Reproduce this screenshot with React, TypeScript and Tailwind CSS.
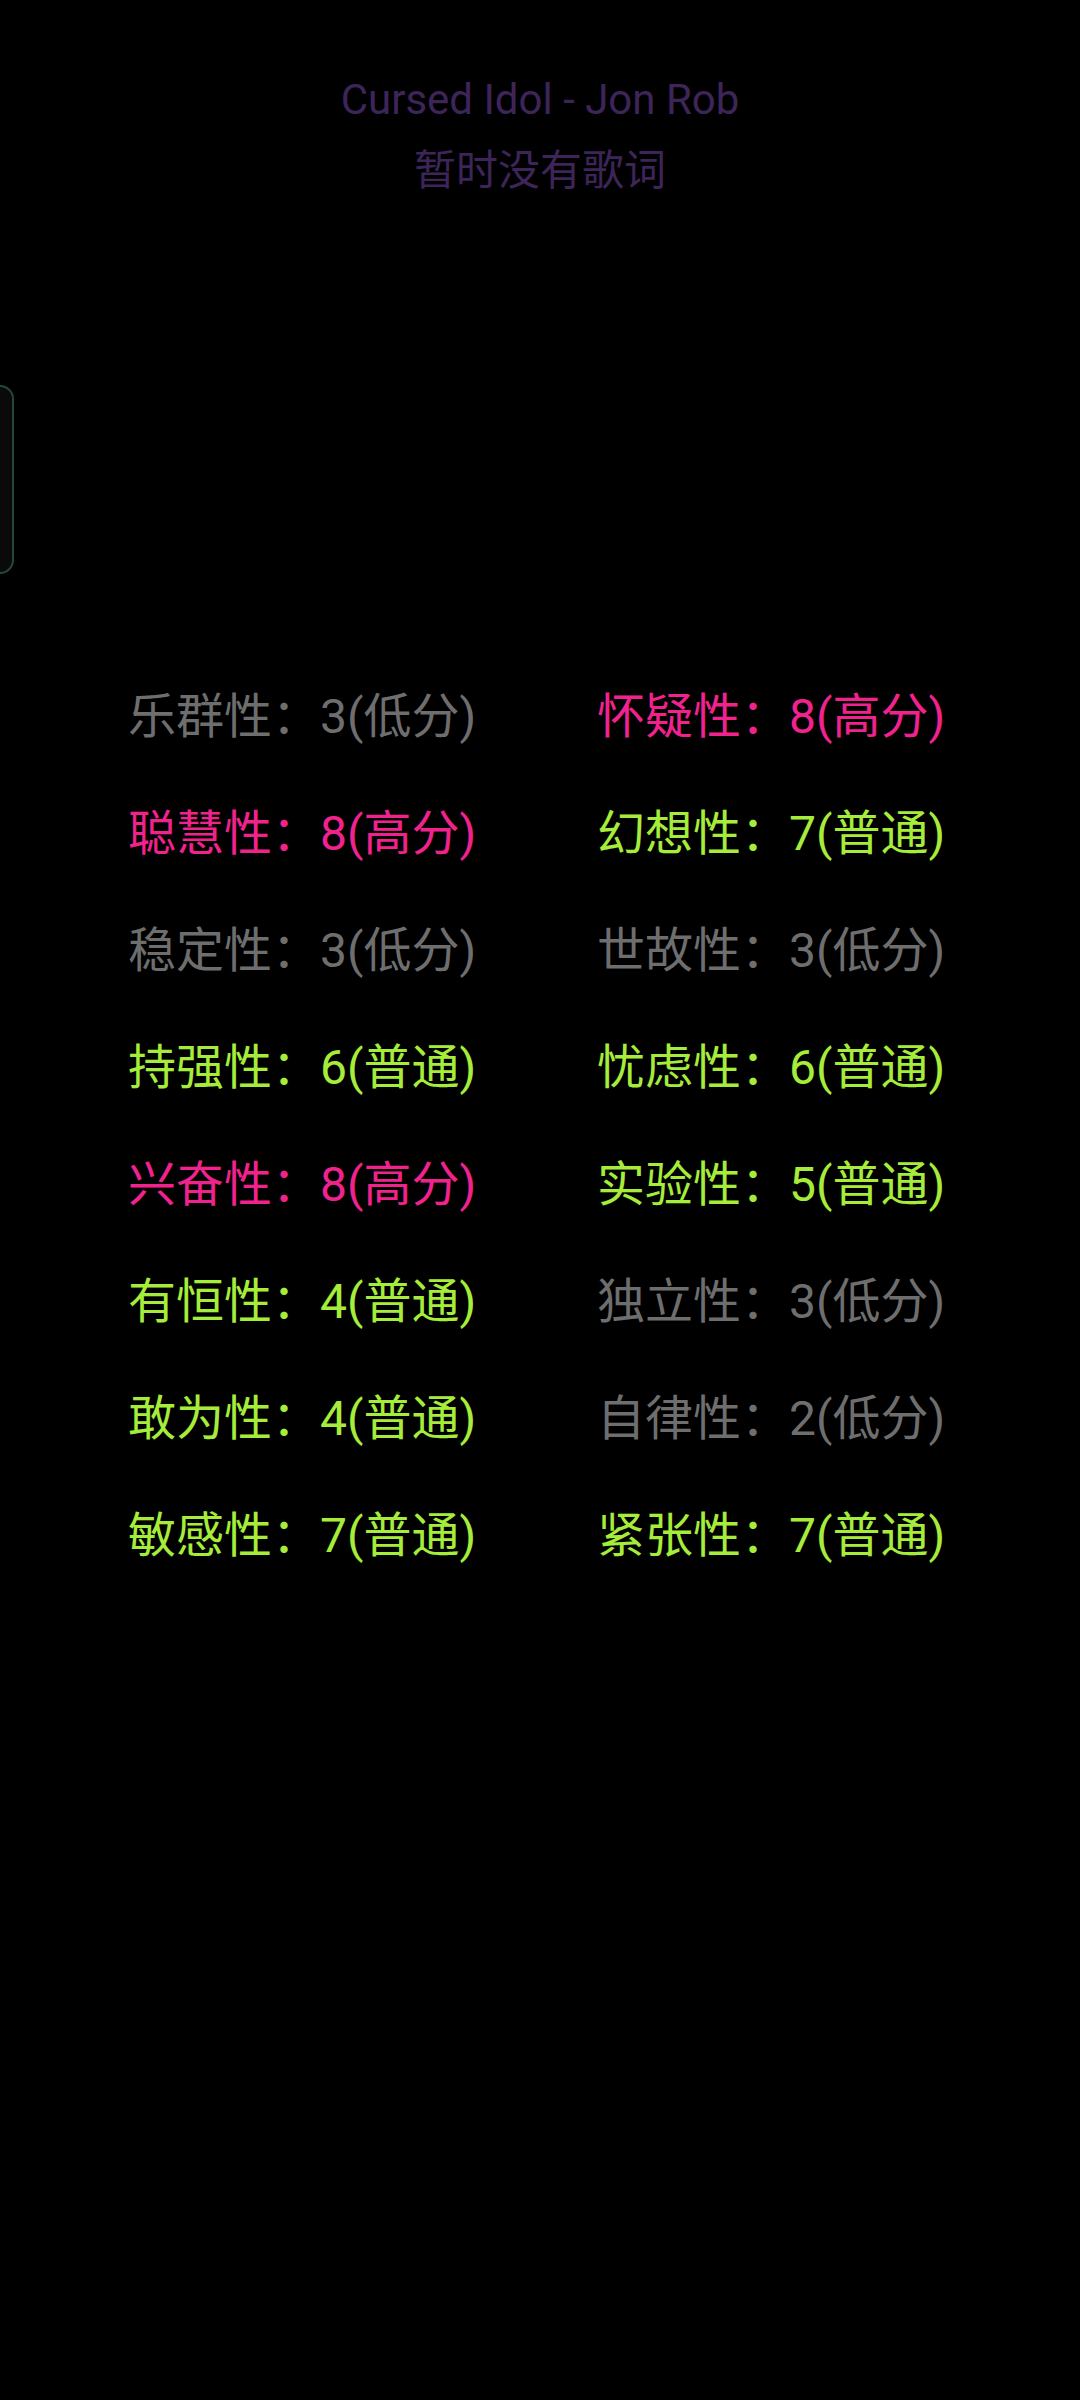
type Level = 'low' | 'mid' | 'high'

const levelColor: Record<Level, string> = {
  low: 'text-[#6e6e6e]',
  mid: 'text-[#a6ec3a]',
  high: 'text-[#f0228d]',
}

const levelLabel: Record<Level, string> = {
  low: '低分',
  mid: '普通',
  high: '高分',
}

const traits: { name: string; score: number; level: Level }[] = [
  { name: '乐群性', score: 3, level: 'low' },
  { name: '怀疑性', score: 8, level: 'high' },
  { name: '聪慧性', score: 8, level: 'high' },
  { name: '幻想性', score: 7, level: 'mid' },
  { name: '稳定性', score: 3, level: 'low' },
  { name: '世故性', score: 3, level: 'low' },
  { name: '持强性', score: 6, level: 'mid' },
  { name: '忧虑性', score: 6, level: 'mid' },
  { name: '兴奋性', score: 8, level: 'high' },
  { name: '实验性', score: 5, level: 'mid' },
  { name: '有恒性', score: 4, level: 'mid' },
  { name: '独立性', score: 3, level: 'low' },
  { name: '敢为性', score: 4, level: 'mid' },
  { name: '自律性', score: 2, level: 'low' },
  { name: '敏感性', score: 7, level: 'mid' },
  { name: '紧张性', score: 7, level: 'mid' },
]

export default function App() {
  return (
    <div className="relative w-[1080px] h-[2400px] bg-black overflow-hidden font-['Roboto','Noto_Sans_CJK_SC',sans-serif]">
      {/* Lyrics header */}
      <div className="flex flex-col items-center pt-[64px] text-[42px] leading-[71px] text-[#3d2559]">
        <div>Cursed Idol - Jon Rob</div>
        <div>暂时没有歌词</div>
      </div>

      {/* Side panel peeking from the left edge */}
      <div className="absolute left-[-40px] top-[385px] w-[54px] h-[189px] rounded-[14px] border-2 border-[#23473c] bg-[#0a0a0a]" />

      {/* Personality traits */}
      <div className="grid grid-cols-[469px_auto] mt-[452px] pl-[128px] text-[48px] leading-[117px]">
        {traits.map((t) => (
          <div key={t.name} className={`whitespace-nowrap ${levelColor[t.level]}`}>
            {t.name}：{t.score}({levelLabel[t.level]})
          </div>
        ))}
      </div>
    </div>
  )
}
